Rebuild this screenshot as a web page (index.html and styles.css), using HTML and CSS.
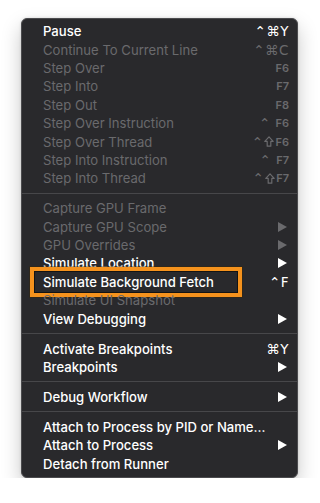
FILE: index.html
```html
<!DOCTYPE html>
<html>
<head>
<meta charset="utf-8">
<link rel="stylesheet" href="styles.css">
</head>
<body>
<div class="menu">
  <div class="item"><span class="label">Pause</span><span class="key">⌃⌘Y</span></div>
  <div class="item off"><span class="label">Continue To Current Line</span><span class="key">⌃⌘C</span></div>
  <div class="item off"><span class="label">Step Over</span><span class="key fk">F6</span></div>
  <div class="item off"><span class="label">Step Into</span><span class="key fk">F7</span></div>
  <div class="item off"><span class="label">Step Out</span><span class="key fk">F8</span></div>
  <div class="item off"><span class="label">Step Over Instruction</span><span class="key">⌃ <span class="fk">F6</span></span></div>
  <div class="item off"><span class="label">Step Over Thread</span><span class="key">⌃<svg class="shift" viewBox="0 0 10 11"><path d="M5 0.8 L9.2 5.4 H6.8 V10.2 H3.2 V5.4 H0.8 Z"/></svg><span class="fk">F6</span></span></div>
  <div class="item off"><span class="label">Step Into Instruction</span><span class="key">⌃ <span class="fk">F7</span></span></div>
  <div class="item off"><span class="label">Step Into Thread</span><span class="key">⌃<svg class="shift" viewBox="0 0 10 11"><path d="M5 0.8 L9.2 5.4 H6.8 V10.2 H3.2 V5.4 H0.8 Z"/></svg><span class="fk">F7</span></span></div>
  <div class="sep"></div>
  <div class="item off"><span class="label">Capture GPU Frame</span></div>
  <div class="item off"><span class="label">Capture GPU Scope</span><svg class="arrow" viewBox="0 0 9 10"><polygon points="0,0 9,5 0,10"/></svg></div>
  <div class="item off"><span class="label">GPU Overrides</span><svg class="arrow" viewBox="0 0 9 10"><polygon points="0,0 9,5 0,10"/></svg></div>
  <div class="item"><span class="label">Simulate Location</span><svg class="arrow" viewBox="0 0 9 10"><polygon points="0,0 9,5 0,10"/></svg></div>
  <div class="item marked"><span class="label">Simulate Background Fetch</span><span class="key">⌃F</span><div class="highlight"></div></div>
  <div class="item off"><span class="label">Simulate UI Snapshot</span></div>
  <div class="item"><span class="label">View Debugging</span><svg class="arrow" viewBox="0 0 9 10"><polygon points="0,0 9,5 0,10"/></svg></div>
  <div class="sep"></div>
  <div class="item"><span class="label">Activate Breakpoints</span><span class="key">⌘Y</span></div>
  <div class="item"><span class="label">Breakpoints</span><svg class="arrow" viewBox="0 0 9 10"><polygon points="0,0 9,5 0,10"/></svg></div>
  <div class="sep"></div>
  <div class="item"><span class="label">Debug Workflow</span><svg class="arrow" viewBox="0 0 9 10"><polygon points="0,0 9,5 0,10"/></svg></div>
  <div class="sep"></div>
  <div class="item"><span class="label">Attach to Process by PID or Name…</span></div>
  <div class="item"><span class="label">Attach to Process</span><svg class="arrow" viewBox="0 0 9 10"><polygon points="0,0 9,5 0,10"/></svg></div>
  <div class="item"><span class="label">Detach from Runner</span></div>
</div>
</body>
</html>
```

FILE: styles.css
```css
html, body {
  margin: 0;
  padding: 0;
  background: #ffffff;
}

body {
  padding: 18px 0 0 21px;
  font-family: Inter, "Noto Sans", "DejaVu Sans", sans-serif;
}

.menu {
  width: 277px;
  box-sizing: border-box;
  background: #29292c;
  border: 1px solid #4b4b4e;
  border-radius: 6px;
  padding: 3px 0 4px;
  display: flex;
  flex-direction: column;
  box-shadow: 0 9px 20px rgba(0, 0, 0, 0.22), 0 0 3px rgba(0, 0, 0, 0.15);
}

.item {
  position: relative;
  height: 18.4px;
  display: flex;
  align-items: center;
  justify-content: space-between;
  padding: 0 8px 0 21px;
  color: #ffffff;
  font-size: 13.1px;
  font-weight: 500;
  white-space: nowrap;
}

.item.off {
  color: #6a6a6d;
  font-weight: 400;
}

.key {
  display: flex;
  align-items: center;
  font-family: "DejaVu Sans", Inter, sans-serif;
  font-size: 13.5px;
  letter-spacing: 0.5px;
  white-space: pre;
}

.fk {
  font-family: Inter, sans-serif;
  font-size: 11px;
  font-weight: 600;
  letter-spacing: 0;
}

.shift {
  width: 10px;
  height: 11px;
  margin: 0 1px 0 1px;
  fill: none;
  stroke: currentColor;
  stroke-width: 1.2;
  stroke-linejoin: round;
}

.arrow {
  width: 9px;
  height: 10px;
  margin-right: 2px;
  fill: currentColor;
}

.sep {
  height: 1px;
  background: #47474a;
  margin: 5px 0 5.6px;
}

.highlight {
  position: absolute;
  left: 8px;
  top: -6px;
  width: 212px;
  height: 30px;
  box-sizing: border-box;
  border: 4px solid #f5921d;
  box-shadow: inset 0 0 0 1px #141414, 0 0 0 1px rgba(60, 40, 0, 0.35);
}
```
